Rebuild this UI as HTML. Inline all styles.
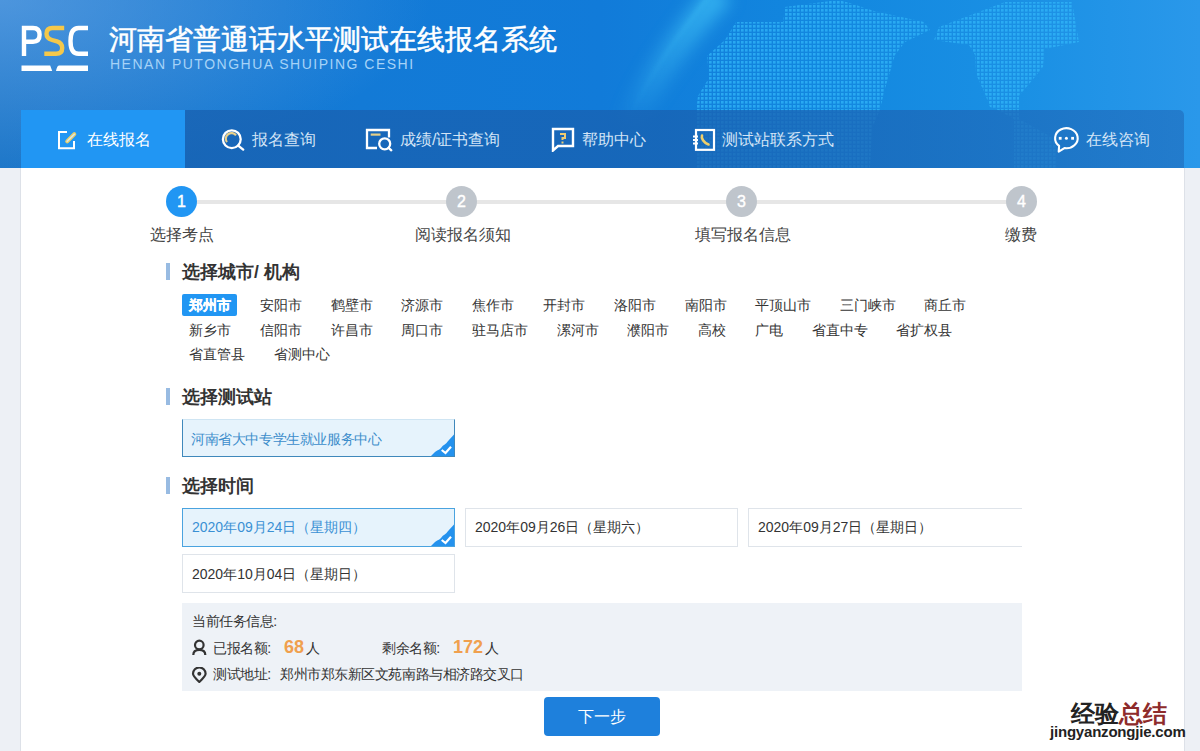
<!DOCTYPE html>
<html><head><meta charset="utf-8">
<style>
*{margin:0;padding:0;box-sizing:border-box}
html,body{width:1200px;height:751px;overflow:hidden;background:#edf0f5;font-family:"Liberation Sans",sans-serif;color:#333}
.a{position:absolute;white-space:nowrap}
#hdr{position:absolute;left:0;top:0;width:1200px;height:168px;background:radial-gradient(ellipse 430px 175px at 0px 0px,rgba(112,172,236,0.58),rgba(112,172,236,0) 100%),linear-gradient(90deg,#1c76c8 0%,#137ad6 30%,#117bd9 50%,#1287df 68%,#1a90e4 85%,#2a98ea 100%);overflow:hidden}
#nav{position:absolute;left:21px;top:110px;width:1163px;height:58px;background:linear-gradient(90deg,rgba(24,98,178,0.8),rgba(24,98,178,0.8) 55%,rgba(32,112,192,0.7));border-radius:0 5px 0 0}
#act{position:absolute;left:21px;top:110px;width:164px;height:58px;background:#2196f3}
.ni{position:absolute;top:111px;height:58px;line-height:58px;font-size:16px;color:#d3e4f6;white-space:nowrap}
#content{position:absolute;left:21px;top:168px;width:1163px;height:583px;background:#fff}
.step{position:absolute;width:31px;height:31px;border-radius:50%;background:#bfc5cc;color:#fff;text-align:center;line-height:31px;font-size:16px;-webkit-text-stroke:0.4px #fff;top:186px}
.step.on{background:#2196f3}
.sline{position:absolute;top:200px;height:4px;background:#e6e6e6}
.slab{position:absolute;top:225px;font-size:16px;color:#444;white-space:nowrap;line-height:20px}
.sec{position:absolute;left:182px;font-size:17.5px;font-weight:bold;color:#333;line-height:20px;white-space:nowrap}
.secbar{position:absolute;left:166px;width:4px;height:17px;background:#98bbe2}
.c{position:absolute;font-size:14px;color:#333;line-height:22px;height:22px;white-space:nowrap}
.c.on{background:#2196f3;color:#fff;font-weight:bold;padding:0 6.5px;border-radius:2px;-webkit-text-stroke:0.3px #fff}
.box{position:absolute;border:1px solid #dfe4ea;background:#fff;font-size:14px;color:#333;padding-left:9px;white-space:nowrap;overflow:hidden}
.box.on{border-color:#4aa3df;background:#e6f3fc;color:#3a90d4}
.chk{position:absolute;right:0;bottom:0;width:23px;height:23px}
</style></head><body>
<div id="hdr">
  <!-- world map dots -->
  <svg class="a" style="left:0;top:0" width="1200" height="168" viewBox="0 0 1200 168">
    <defs>
      <pattern id="dots" width="4" height="4" patternUnits="userSpaceOnUse">
        <rect x="1" y="1" width="2.6" height="2.6" fill="#30b4f8" opacity="0.75"/>
      </pattern>
      <linearGradient id="arcg" x1="0" y1="0" x2="0" y2="1">
        <stop offset="0" stop-color="#4fd6ff" stop-opacity="0.55"/>
        <stop offset="0.75" stop-color="#4fd6ff" stop-opacity="0.15"/>
        <stop offset="1" stop-color="#4fd6ff" stop-opacity="0"/>
      </linearGradient>
      <radialGradient id="lglow" cx="0.5" cy="0.5" r="0.5">
        <stop offset="0" stop-color="#ffffff" stop-opacity="0.06"/>
        <stop offset="1" stop-color="#ffffff" stop-opacity="0"/>
      </radialGradient>
    </defs>
    
    <path d="M722 -8 C 690 28, 655 70, 628 130" stroke="url(#arcg)" stroke-width="26" fill="none" style="filter:blur(8px)"/>
    <path d="M712 -8 C 684 28, 652 68, 626 125" stroke="url(#arcg)" stroke-width="4" fill="none" opacity="0.4" style="filter:blur(2px)"/>
    <path fill="url(#dots)" d="M838 0 L850 3 L874 11 L924 22 L930 30 L905 42 L895 55 L884 92 L880 110 L872 128 L870 168 L696 168 L696 112 L698 96 L709 78 L707 56 L725 40 L736 22 L783 22 L785 7 Z"/>
    <path fill="url(#dots)" d="M939 27 L976 13 L1005 2 L1072 2 L1079 42 L1045 49 L1043 67 L1034 78 L1019 96 L1019 119 L1057 140 L1057 168 L1014 168 L1014 119 L998 110 L990 107 L985 94 L976 74 L975 55 L969 45 L934 40 Z"/>
  </svg>
  <!-- logo -->
  <svg class="a" style="left:0;top:0" width="100" height="80" viewBox="0 0 100 80">
    <path d="M24 56 V28 H33 C37.5 28 39.6 30.5 39.6 34.8 C39.6 39.2 37.5 41.7 33 41.7 H24" stroke="#fff" stroke-width="4.4" fill="none"/>
    <path d="M64.2 28 H52.5 C48.6 28 46.5 30.2 46.5 33.8 C46.5 37.2 48.6 39 52 40 L57 41.4 C60.4 42.4 62.2 44.5 62.2 48 C62.2 51.6 60 53.8 56 53.8 H44.3" stroke="#f5c84a" stroke-width="4.4" fill="none"/>
    <path d="M88 28 H78.5 C73.2 28 70.5 32 70.5 41 C70.5 50 73.2 53.8 78.5 53.8 H88" stroke="#fff" stroke-width="4.4" fill="none"/>
    <path d="M21.5 65.5 H50.2 L52.2 71 H21.5 Z M88 65.5 H59.5 C58 65.5 57 66.5 56 71 H88 Z" fill="#fff"/>
  </svg>
  <div class="a" style="left:109px;top:23px;font-size:28px;line-height:34px;color:#fff;letter-spacing:0px;-webkit-text-stroke:0.5px #fff">河南省普通话水平测试在线报名系统</div>
  <div class="a" style="left:110px;top:56px;font-size:14px;line-height:16px;color:#a6d3f7;letter-spacing:1.5px">HENAN PUTONGHUA SHUIPING CESHI</div>
</div>
<div id="nav"></div>
<div id="act"></div>
<div id="content"></div>
<div class="a" style="left:20px;top:168px;width:1px;height:583px;background:#dde1e8"></div>
<div class="a" style="left:1184px;top:168px;width:1px;height:583px;background:#dde1e8"></div>

<!-- nav items -->
<svg class="a" style="left:56px;top:130px" width="22" height="22" viewBox="0 0 22 22">
  <path d="M11 2 H3 V18.2 H18 V11" stroke="#fff" stroke-width="2" fill="none"/>
  <path d="M11.2 11.3 L18.3 4.2" stroke="#e8cf6a" stroke-width="4" stroke-linecap="round" fill="none"/>
  <path d="M11.2 11.3 L18.3 4.2" stroke="#d8e6ee" stroke-width="1.4" stroke-linecap="round" fill="none"/>
</svg>
<div class="ni" style="left:87px;color:#fff">在线报名</div>

<svg class="a" style="left:219px;top:127px" width="28" height="26" viewBox="0 0 28 26">
  <circle cx="12.8" cy="12.2" r="8.9" stroke="#fff" stroke-width="2.3" fill="none"/>
  <path d="M7.9 15.2 A5.6 5.6 0 0 1 17 8.4" stroke="#e9d08a" stroke-width="2.2" fill="none"/>
  <path d="M19.2 18.6 L24.2 22.6" stroke="#fff" stroke-width="2.4" stroke-linecap="round"/>
</svg>
<div class="ni" style="left:252px">报名查询</div>

<svg class="a" style="left:365px;top:128px" width="30" height="24" viewBox="0 0 30 24">
  <path d="M12 20 H2 V2 H24 V9.5" stroke="#fff" stroke-width="2.3" fill="none"/>
  <path d="M5.7 6.6 H15.5" stroke="#e6d088" stroke-width="2.2"/>
  <circle cx="19.7" cy="15.8" r="5.5" stroke="#fff" stroke-width="2.3" fill="none"/>
  <path d="M23.6 19.8 L26.3 22.3" stroke="#fff" stroke-width="2.3" stroke-linecap="round"/>
</svg>
<div class="ni" style="left:400px">成绩/证书查询</div>

<svg class="a" style="left:551px;top:127px" width="24" height="25" viewBox="0 0 24 25">
  <path d="M2 23.5 V2 H22 V19 H7 Z" stroke="#fff" stroke-width="2.4" fill="none" stroke-linejoin="miter"/>
  <path d="M9 7 H14 V11 H11.5 V13" stroke="#eccb72" stroke-width="2" fill="none"/>
  <rect x="10.5" y="14.5" width="2" height="2" fill="#eccb72"/>
</svg>
<div class="ni" style="left:582px">帮助中心</div>

<svg class="a" style="left:690px;top:127px" width="28" height="26" viewBox="0 0 28 26">
  <rect x="6" y="3" width="18" height="19.8" stroke="#fff" stroke-width="2.2" fill="none"/>
  <path d="M3 9.5 H8 M3 13 H8 M3 16.5 H8" stroke="#fff" stroke-width="1.8"/>
  <path d="M12 8.5 C11 11,13.5 15.5,18.5 17.5" stroke="#f0cf6a" stroke-width="2.6" fill="none" stroke-linecap="round"/>
</svg>
<div class="ni" style="left:722px">测试站联系方式</div>

<svg class="a" style="left:1050px;top:124px" width="30" height="30" viewBox="0 0 30 30">
  <path d="M9.13 21.86 L8.7 27.6 L14.43 24.05 A11.3 10 0 1 0 9.13 21.86 Z" stroke="#fff" stroke-width="2.1" fill="none" stroke-linejoin="round"/>
  <rect x="8.8" y="12.9" width="2.8" height="2.8" fill="#fff"/><circle cx="16.4" cy="14.3" r="1.5" fill="#fff"/><rect x="21.2" y="12.9" width="2.8" height="2.8" fill="#fff"/>
</svg>
<div class="ni" style="left:1086px">在线咨询</div>

<!-- steps -->
<div class="sline" style="left:196px;width:830px"></div>
<div class="step on" style="left:166px">1</div>
<div class="step" style="left:446px">2</div>
<div class="step" style="left:726px">3</div>
<div class="step" style="left:1006px">4</div>
<div class="slab" style="left:150px">选择考点</div>
<div class="slab" style="left:415px">阅读报名须知</div>
<div class="slab" style="left:695px">填写报名信息</div>
<div class="slab" style="left:1005px">缴费</div>

<div class="secbar" style="top:263px"></div>
<div class="sec" style="top:262px">选择城市/ 机构</div>

<!-- cities -->
<div class="c on" style="left:182px;top:294px">郑州市</div>
<div class="c" style="left:260px;top:294px">安阳市</div>
<div class="c" style="left:331px;top:294px">鹤壁市</div>
<div class="c" style="left:401px;top:294px">济源市</div>
<div class="c" style="left:472px;top:294px">焦作市</div>
<div class="c" style="left:543px;top:294px">开封市</div>
<div class="c" style="left:614px;top:294px">洛阳市</div>
<div class="c" style="left:685px;top:294px">南阳市</div>
<div class="c" style="left:755px;top:294px">平顶山市</div>
<div class="c" style="left:840px;top:294px">三门峡市</div>
<div class="c" style="left:924px;top:294px">商丘市</div>

<div class="c" style="left:189px;top:319px">新乡市</div>
<div class="c" style="left:260px;top:319px">信阳市</div>
<div class="c" style="left:331px;top:319px">许昌市</div>
<div class="c" style="left:401px;top:319px">周口市</div>
<div class="c" style="left:472px;top:319px">驻马店市</div>
<div class="c" style="left:557px;top:319px">漯河市</div>
<div class="c" style="left:627px;top:319px">濮阳市</div>
<div class="c" style="left:698px;top:319px">高校</div>
<div class="c" style="left:755px;top:319px">广电</div>
<div class="c" style="left:812px;top:319px">省直中专</div>
<div class="c" style="left:896px;top:319px">省扩权县</div>

<div class="c" style="left:189px;top:343px">省直管县</div>
<div class="c" style="left:274px;top:343px">省测中心</div>

<div class="secbar" style="top:388px"></div>
<div class="sec" style="top:387px">选择测试站</div>

<div class="box on" style="left:182px;top:419px;width:273px;height:38px;line-height:38px;border-width:1px 1.5px 1.5px 1.5px;border-color:#cfe5f3 #3f88bb #3f88bb #3f88bb;font-size:14px;color:#3c8dcb;padding-left:8px;letter-spacing:-0.4px">河南省大中专学生就业服务中心
  <svg class="chk" viewBox="0 0 23 23"><path d="M0 23 L4 19 C6 17 7.5 17.5 9 16 C11 14 11 13 13 12 C15 11 16 9 18 7 C20 5 21 3.5 23 1.5 V23 Z" fill="#2492ee"/><path d="M10.7 17 L14.5 20 L20 13.7" stroke="#fff" stroke-width="2.2" fill="none"/></svg>
</div>

<div class="secbar" style="top:477px"></div>
<div class="sec" style="top:476px">选择时间</div>

<div class="a" style="left:182px;top:508px;width:840px;height:40px;overflow:hidden">
  <div class="box on" style="left:0;top:0;width:273px;height:39px;line-height:37px">2020年09月24日（星期四）
    <svg class="chk" viewBox="0 0 23 23"><path d="M0 23 L4 19 C6 17 7.5 17.5 9 16 C11 14 11 13 13 12 C15 11 16 9 18 7 C20 5 21 3.5 23 1.5 V23 Z" fill="#2492ee"/><path d="M10.7 17 L14.5 20 L20 13.7" stroke="#fff" stroke-width="2.2" fill="none"/></svg>
  </div>
  <div class="box" style="left:283px;top:0;width:273px;height:39px;line-height:37px">2020年09月26日（星期六）</div>
  <div class="box" style="left:566px;top:0;width:300px;height:39px;line-height:37px">2020年09月27日（星期日）</div>
</div>
<div class="box" style="left:182px;top:554px;width:273px;height:39px;line-height:39px">2020年10月04日（星期日）</div>

<!-- info panel -->
<div class="a" style="left:182px;top:603px;width:840px;height:88px;background:#eef2f7"></div>
<div class="a" style="left:192px;top:612px;font-size:14px;line-height:18px;color:#333;letter-spacing:-0.45px">当前任务信息<span style="letter-spacing:0">:</span></div>
<svg class="a" style="left:191px;top:639px" width="17" height="17" viewBox="0 0 17 17">
  <circle cx="8.3" cy="6" r="4.3" stroke="#333" stroke-width="2.2" fill="none"/>
  <path d="M2.3 16 C2.3 12.5,4.5 10.8,8.3 10.8 C12.1 10.8,14.3 12.5,14.3 16" stroke="#333" stroke-width="2.2" fill="none"/>
</svg>
<div class="a" style="left:213px;top:639px;font-size:14px;line-height:18px;color:#333;letter-spacing:-0.45px">已报名额<span style="letter-spacing:0">:</span></div>
<div class="a" style="left:284px;top:636px;font-size:18px;line-height:22px;font-weight:bold;color:#f0a04e">68</div>
<div class="a" style="left:306px;top:639px;font-size:14px;line-height:18px;color:#333">人</div>
<div class="a" style="left:382px;top:639px;font-size:14px;line-height:18px;color:#333;letter-spacing:-0.45px">剩余名额<span style="letter-spacing:0">:</span></div>
<div class="a" style="left:453px;top:636px;font-size:18px;line-height:22px;font-weight:bold;color:#f0a04e">172</div>
<div class="a" style="left:485px;top:639px;font-size:14px;line-height:18px;color:#333">人</div>
<svg class="a" style="left:191px;top:667px" width="17" height="16" viewBox="0 0 17 16">
  <path d="M8.3 15 C4 11,2 8.5,2 6.8 A6.3 6.3 0 0 1 14.6 6.8 C14.6 8.5,12.6 11,8.3 15 Z" stroke="#333" stroke-width="2.2" fill="none" stroke-linejoin="round"/>
  <circle cx="8.3" cy="6.8" r="2" fill="#333"/>
</svg>
<div class="a" style="left:213px;top:665px;font-size:14px;line-height:18px;color:#333;letter-spacing:-0.45px">测试地址<span style="letter-spacing:0">:</span></div>
<div class="a" style="left:280px;top:665px;font-size:14px;line-height:18px;color:#333;letter-spacing:-0.45px">郑州市郑东新区文苑南路与相济路交叉口</div>

<!-- button -->
<div class="a" style="left:544px;top:697px;width:116px;height:39px;background:#1e80dc;border-radius:4px;color:#fff;font-size:16px;line-height:39px;text-align:center">下一步</div>

<!-- watermark -->
<div class="a" style="left:1071px;top:701px;font-size:24px;line-height:26px;font-weight:bold;color:#222">经验<span style="color:#8e2b2b">总结</span></div>
<div class="a" style="left:1050px;top:722px;font-size:15px;line-height:20px;color:#222;font-weight:bold;letter-spacing:-0.2px">jingyanzongjie.com</div>

</body></html>
